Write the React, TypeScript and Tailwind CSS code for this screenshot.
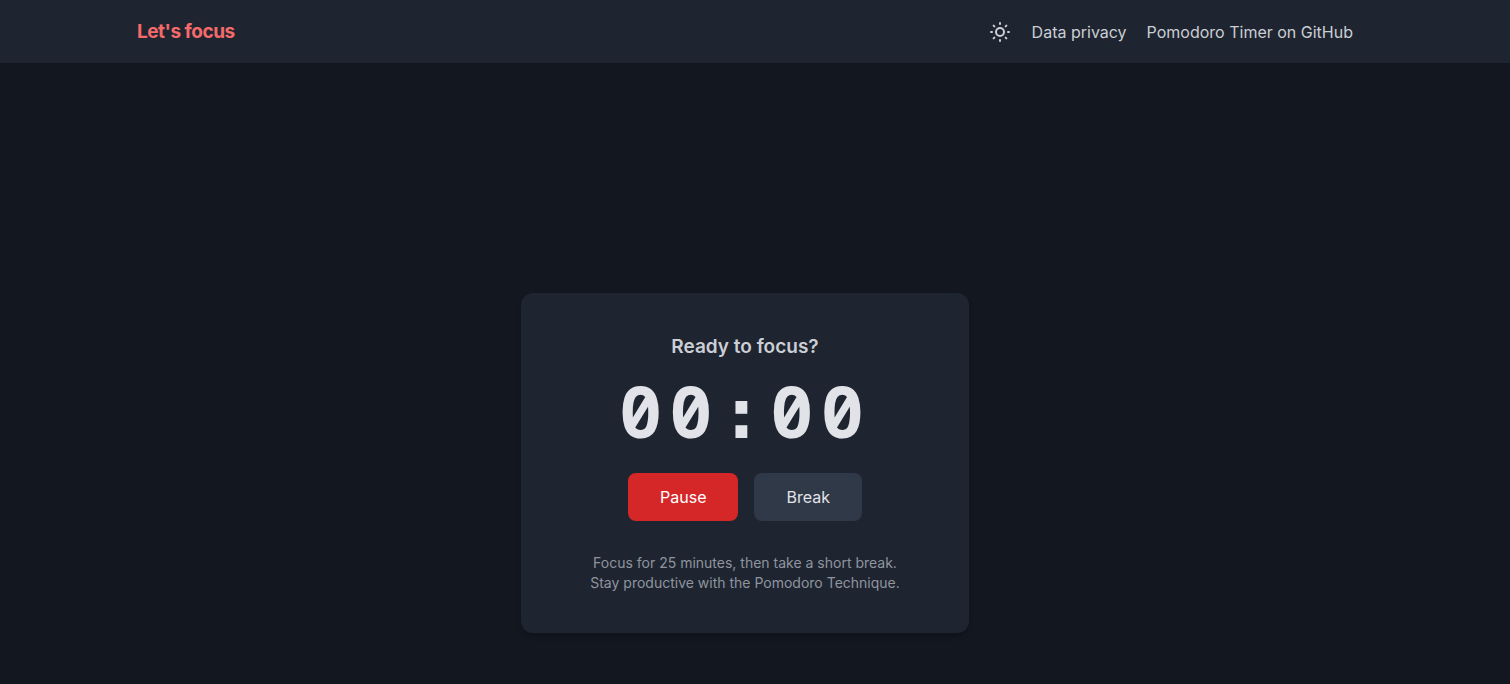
import { SunMedium } from "lucide-react";

function Header() {
  return (
    <header className="bg-[#1e2530] pr-5 shadow-xs">
      <div className="mx-auto flex max-w-7xl items-center justify-between px-8 pt-[18px] pb-[17px]">
        <a href="#home" className="text-[19px] leading-7 font-bold tracking-tight text-[#f56a6a]">
          Let's focus
        </a>
        <nav className="flex items-center gap-5 text-[#cbced5]">
          <button type="button" aria-label="Toggle theme">
            <SunMedium className="size-6" />
          </button>
          <a href="#privacy">Data privacy</a>
          <a href="#github">Pomodoro Timer on GitHub</a>
        </nav>
      </div>
    </header>
  );
}

function TimerCard() {
  return (
    <section className="w-full max-w-md rounded-xl bg-[#1e2530] p-10 text-center shadow-md">
      <h2 className="mb-[13px] text-[19px] leading-7 font-semibold text-[#cbced5]">Ready to focus?</h2>
      <div className="mb-6 font-['Noto_Sans_Mono','DejaVu_Sans_Mono',monospace] text-7xl leading-none font-bold tracking-widest text-[#e2e3e9]">
        00<span className="font-['DejaVu_Sans_Mono',monospace]">:</span>00
      </div>
      <div className="flex justify-center gap-4">
        <button type="button" className="rounded-lg bg-[#d52728] px-8 py-3 text-white">
          Pause
        </button>
        <button type="button" className="rounded-lg bg-[#303948] px-8 py-3 text-[#e2e3e9]">
          Break
        </button>
      </div>
      <p className="mt-8 text-sm text-[#8f949f]">
        Focus for 25 minutes, then take a short break.
        <br />
        Stay productive with the Pomodoro Technique.
      </p>
    </section>
  );
}

export default function App() {
  return (
    <div className="flex min-h-screen flex-col bg-[#121720] font-['Inter',sans-serif]">
      <Header />
      <main className="flex flex-1 items-end justify-center pt-8 pr-5 pb-[51px]">
        <TimerCard />
      </main>
    </div>
  );
}
